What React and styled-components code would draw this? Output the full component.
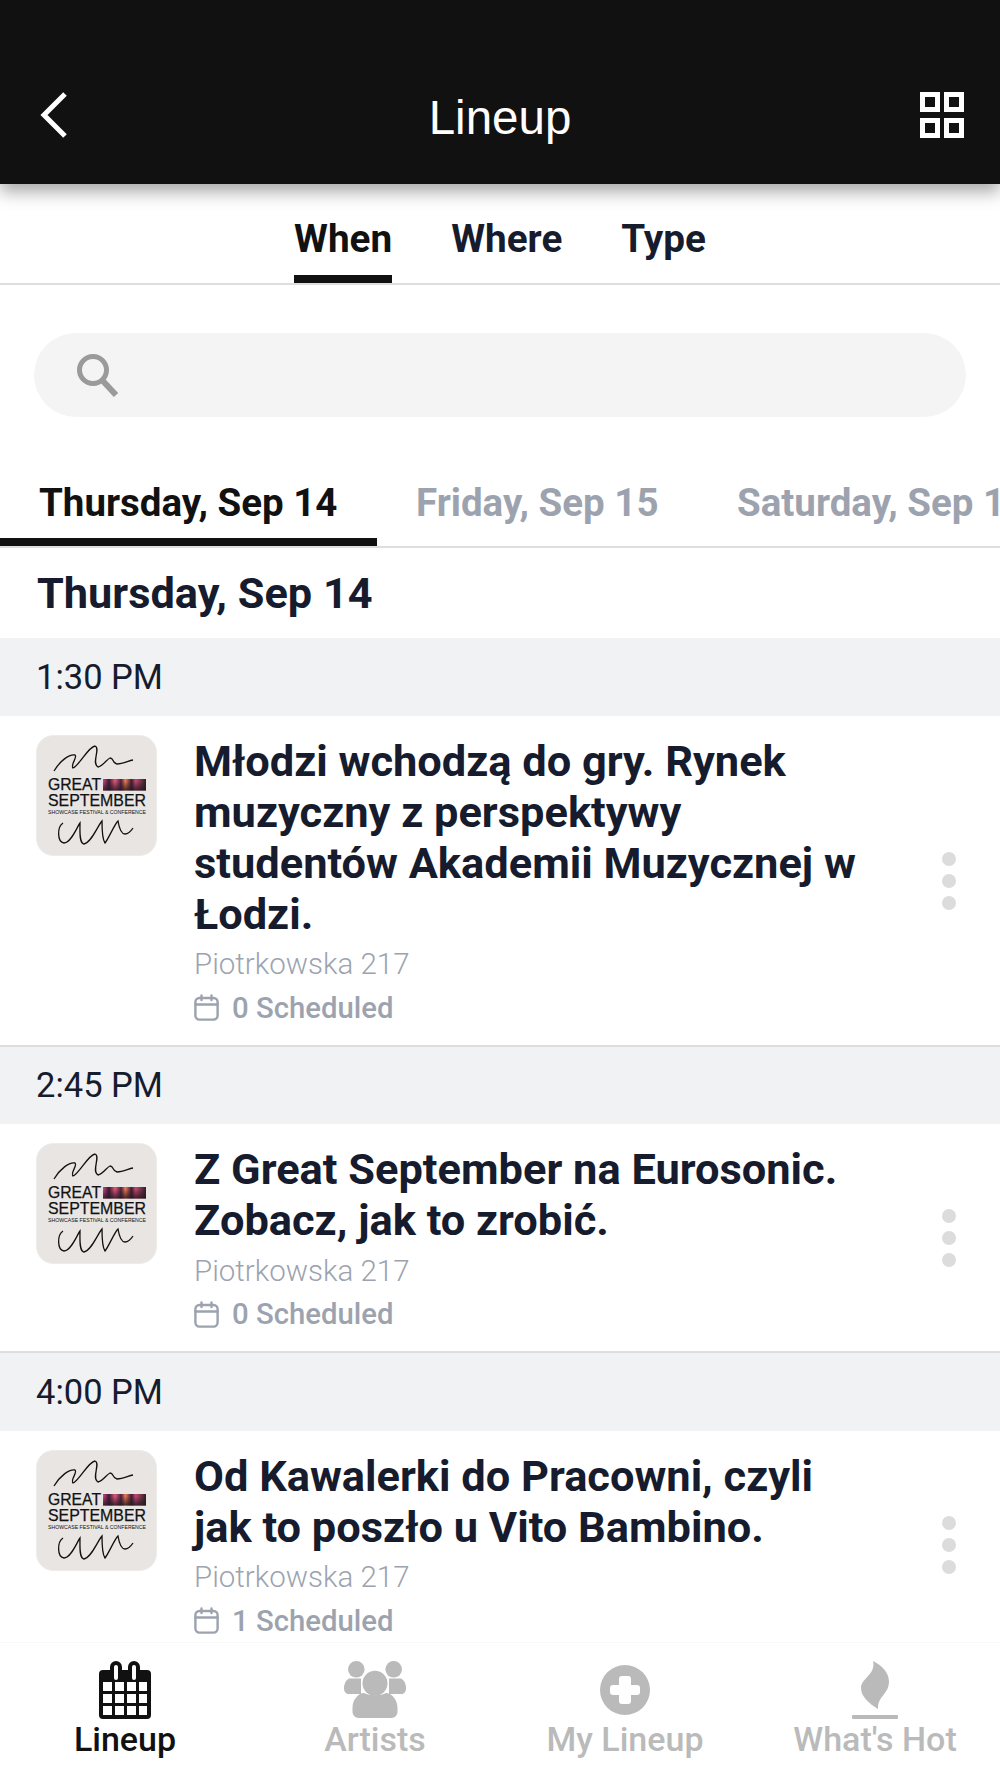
import React from "react";
import styled, { createGlobalStyle } from "styled-components";

const sessions = [
  {
    time: "1:30 PM",
    title: "Młodzi wchodzą do gry. Rynek muzyczny z perspektywy studentów Akademii Muzycznej w Łodzi.",
    scheduled: 0,
  },
  {
    time: "2:45 PM",
    title: "Z Great September na Eurosonic. Zobacz, jak to zrobić.",
    scheduled: 0,
  },
  {
    time: "4:00 PM",
    title: "Od Kawalerki do Pracowni, czyli jak to poszło u Vito Bambino.",
    scheduled: 1,
  },
];

const GlobalStyle = createGlobalStyle`
  html, body {
    margin: 0;
    padding: 0;
    background: #fff;
  }
  * {
    box-sizing: border-box;
  }
`;

const Page = styled.div`
  width: 1000px;
  height: 1778px;
  display: flex;
  flex-direction: column;
  overflow: hidden;
  font-family: Roboto, "Liberation Sans", sans-serif;
  color: #161c2d;
`;

const Header = styled.header`
  position: relative;
  z-index: 2;
  flex: none;
  height: 184px;
  padding: 92px 36px 0;
  display: grid;
  grid-template-columns: 1fr auto 1fr;
  align-items: start;
  background: #111112;
  box-shadow: 0 8px 16px rgba(0, 0, 0, 0.34);
`;

const HeaderTitle = styled.h1`
  margin: 0;
  font-family: "Liberation Sans", Arial, sans-serif;
  font-size: 47.5px;
  line-height: 52px;
  font-weight: 400;
  color: #fff;
`;

const HeaderIcon = styled.svg`
  display: block;
  justify-self: ${(p) => p.$side};
  margin-left: ${(p) => p.$offset || 0}px;
  width: ${(p) => p.$w}px;
  height: 46px;
`;

const ModeTabs = styled.nav`
  flex: none;
  height: 101px;
  display: flex;
  justify-content: center;
  gap: 59px;
  border-bottom: 2px solid #dedede;
`;

const ModeTab = styled.div`
  height: 99px;
  padding-top: 32px;
  font-size: 38.7px;
  line-height: 46px;
  font-weight: 700;
  color: ${(p) => (p.$active ? "#111" : "#161c2d")};
  border-bottom: 8px solid ${(p) => (p.$active ? "#111" : "transparent")};
`;

const SearchWrap = styled.div`
  flex: none;
  padding: 48px 34px 0;
`;

const SearchBar = styled.div`
  height: 84px;
  padding-left: 42px;
  display: flex;
  align-items: center;
  border-radius: 42px;
  background: #f4f4f4;
`;

const DayTabs = styled.nav`
  flex: none;
  margin-top: 48px;
  height: 83px;
  display: flex;
  overflow: hidden;
  border-bottom: 2px solid #dedede;
`;

const DayTab = styled.div`
  flex: none;
  height: 81px;
  width: ${(p) => p.$w}px;
  padding: 16px 0 0 ${(p) => p.$pad}px;
  font-size: 38.5px;
  line-height: 44px;
  font-weight: 700;
  white-space: nowrap;
  color: ${(p) => (p.$active ? "#111" : "#9ca3af")};
  border-bottom: 8px solid ${(p) => (p.$active ? "#111" : "transparent")};
`;

const Content = styled.main`
  flex: 1;
  min-height: 0;
  overflow: hidden;
`;

const DayHeading = styled.h2`
  margin: 0;
  height: 90px;
  padding: 0 37px;
  display: flex;
  align-items: center;
  font-size: 43.3px;
  font-weight: 700;
  color: #161c2d;
`;

const TimeBand = styled.div`
  height: 77.5px;
  padding-left: 36px;
  display: flex;
  align-items: center;
  background: #f1f2f4;
  font-size: 34.5px;
  color: #161c2d;
`;

const Row = styled.article`
  display: grid;
  grid-template-columns: 121px 676px 1fr;
  column-gap: 37px;
  padding: 19px 0 15px 36px;
  background: #fff;
  border-bottom: 2px solid #dedede;
`;

const Body = styled.div`
  grid-column: 2;
  padding-top: 1px;
`;

const Title = styled.h3`
  margin: 0;
  font-size: 43.4px;
  line-height: 51px;
  font-weight: 700;
  color: #161c2d;
`;

const Location = styled.div`
  height: 43px;
  display: flex;
  align-items: center;
  margin-top: 3px;
  font-size: 29.5px;
  font-weight: 300;
  color: #9ca3af;
`;

const Scheduled = styled.div`
  height: 44px;
  display: flex;
  align-items: center;
  gap: 13px;
  font-size: 29.3px;
  font-weight: 500;
  color: #9ca3af;
`;

const Dots = styled.div`
  align-self: center;
  margin: -3px 0 0 35px;
  display: flex;
  flex-direction: column;
  gap: 8px;
`;

const Dot = styled.span`
  display: block;
  width: 14px;
  height: 14px;
  border-radius: 50%;
  background: #dcdcdc;
`;

const TabBar = styled.footer`
  position: relative;
  z-index: 1;
  flex: none;
  height: 136px;
  padding-top: 18px;
  display: grid;
  grid-template-columns: repeat(4, 1fr);
  background: #fff;
  border-top: 1px solid #f8f8f8;
`;

const BarItem = styled.div`
  display: flex;
  flex-direction: column;
  align-items: center;
  color: ${(p) => (p.$active ? "#111" : "#bababa")};
`;

const BarIconBox = styled.div`
  height: 58px;
  display: flex;
  align-items: center;
  justify-content: center;
`;

const BarLabel = styled.span`
  font-size: 34px;
  line-height: 40px;
  font-weight: 500;
  white-space: nowrap;
`;

const BackIcon = () => (
  <HeaderIcon $w={28} $side="start" $offset={4} viewBox="0 0 28 46" fill="none">
    <path d="M25 2 4 23l21 21" stroke="#fff" strokeWidth="5" strokeLinecap="butt" />
  </HeaderIcon>
);

const GridIcon = () => (
  <HeaderIcon $w={44} $side="end" viewBox="0 0 44 46" fill="none" stroke="#fff" strokeWidth="5">
    <rect x="2.5" y="2.5" width="15" height="15" />
    <rect x="26.5" y="2.5" width="15" height="15" />
    <rect x="2.5" y="28.5" width="15" height="15" />
    <rect x="26.5" y="28.5" width="15" height="15" />
  </HeaderIcon>
);

const SearchIcon = () => (
  <svg width="44" height="44" viewBox="0 0 44 44" fill="none" stroke="#9a9a9a">
    <circle cx="17" cy="17" r="13.5" strokeWidth="5" />
    <path d="m26 27 14 15" strokeWidth="6" />
  </svg>
);

const SmallCalendar = () => (
  <svg width="25" height="27" viewBox="0 0 25 27" fill="none" stroke="#9ca3af" strokeWidth="2.4" strokeLinecap="round">
    <rect x="1.4" y="4" width="22.2" height="21.6" rx="4" />
    <path d="M1.4 10.5h22.2M7.5 1.4v4.6M17.5 1.4v4.6" />
  </svg>
);

const Logo = () => (
  <svg width="121" height="121" viewBox="0 0 121 121">
    <defs>
      <linearGradient id="heat" x1="0" x2="1" y1="0" y2="0">
        <stop offset="0" stopColor="#d43f86" />
        <stop offset="0.14" stopColor="#3a1b35" />
        <stop offset="0.28" stopColor="#e0567a" />
        <stop offset="0.42" stopColor="#4a2040" />
        <stop offset="0.52" stopColor="#ef7a4e" />
        <stop offset="0.66" stopColor="#3d1d38" />
        <stop offset="0.76" stopColor="#c2476f" />
        <stop offset="1" stopColor="#2a2024" />
      </linearGradient>
      <linearGradient id="heatShade" x1="0" x2="0" y1="0" y2="1">
        <stop offset="0.2" stopColor="#221a20" stopOpacity="0" />
        <stop offset="1" stopColor="#221a20" stopOpacity="0.85" />
      </linearGradient>
    </defs>
    <rect x="0.5" y="0.5" width="120" height="120" rx="17" fill="#e8e5e2" stroke="#eeece9" />
    <path
      d="M18 36C24 26 33 19 39 20 42 22 34 30 37 33 43 31 52 12 59 11 65 13 55 28 62 32 67 31 71 24 74 23 78 23 76 28 81 29 87 29 92 26 97 25"
      fill="none"
      stroke="#111"
      strokeWidth="1.3"
    />
    <g fill="#111" fontFamily="'Liberation Sans', Arial, sans-serif">
      <text x="12" y="55" fontSize="16.5" stroke="#111" strokeWidth="0.25" textLength="53" lengthAdjust="spacingAndGlyphs">GREAT</text>
      <text x="12" y="71" fontSize="16.5" stroke="#111" strokeWidth="0.25" textLength="98" lengthAdjust="spacingAndGlyphs">SEPTEMBER</text>
      <text x="12" y="79" fontSize="5.4" textLength="98" lengthAdjust="spacingAndGlyphs">SHOWCASE FESTIVAL &amp; CONFERENCE</text>
    </g>
    <rect x="67" y="44" width="43" height="11.5" fill="url(#heat)" />
    <rect x="67" y="44" width="43" height="11.5" fill="url(#heatShade)" />
    <path
      d="M27 88C21 92 21 107 28 108 35 108 41 92 44 88 44 96 43 108 48 109 55 108 61 92 66 86 66 94 66 104 69 108 73 103 78 90 82 86 83 92 85 99 89 99 92 99 95 96 97 93"
      fill="none"
      stroke="#111"
      strokeWidth="1.3"
    />
  </svg>
);

const CalendarBarIcon = () => (
  <svg width="54" height="58" viewBox="0 0 54 58" fill="currentColor">
    <path
      fillRule="evenodd"
      d="M5 9h7V6a6 6 0 0 1 12 0v3h6V6a6 6 0 0 1 12 0v3h7a4 4 0 0 1 4 4v41a4 4 0 0 1-4 4H5a4 4 0 0 1-4-4V13a4 4 0 0 1 4-4Zm11-3v11a2 2 0 0 0 4 0V6a2 2 0 0 0-4 0Zm18 0v11a2 2 0 0 0 4 0V6a2 2 0 0 0-4 0ZM5 21v9h9v-9Zm12 0v9h9v-9Zm12 0v9h9v-9Zm12 0v9h8v-9ZM5 33v9h9v-9Zm12 0v9h9v-9Zm12 0v9h9v-9Zm12 0v9h8v-9ZM5 45v9h9v-9Zm12 0v9h9v-9Zm12 0v9h9v-9Zm12 0v9h8v-9Z"
    />
  </svg>
);

const PeopleBarIcon = () => (
  <svg width="62" height="58" viewBox="0 0 62 58" fill="currentColor">
    <circle cx="12.3" cy="8.3" r="8.3" />
    <circle cx="49.7" cy="8.3" r="8.3" />
    <path d="M5 17.500C2 19 0 23 0 27c0 4 2 6 5 6h12V17.500Z" />
    <path d="M57 17.500c3 1.500 5 5.500 5 9.500 0 4-2 6-5 6H45V17.500Z" />
    <circle cx="31" cy="22.300" r="12.500" stroke="#fff" strokeWidth="2.500" paintOrder="stroke" />
    <path d="M8.500 47C8.500 38 15 32 20 32c5 3 17 3 22 0 5 0 11.500 6 11.500 15v4a6 6 0 0 1-6 6H14.500a6 6 0 0 1-6-6Z" />
  </svg>
);

const PlusBarIcon = () => (
  <svg width="50" height="50" viewBox="0 0 50 50" fill="currentColor">
    <path
      fillRule="evenodd"
      d="M25 0a25 25 0 1 1 0 50 25 25 0 0 1 0-50Zm-3 11a3 3 0 0 0-3 3v6h-6a3 3 0 0 0-3 3v4a3 3 0 0 0 3 3h6v6a3 3 0 0 0 3 3h6a3 3 0 0 0 3-3v-6h6a3 3 0 0 0 3-3v-4a3 3 0 0 0-3-3h-6v-6a3 3 0 0 0-3-3Z"
    />
  </svg>
);

const FlameBarIcon = () => (
  <svg width="46" height="58" viewBox="0 0 46 58" fill="currentColor">
    <path d="M21 0c8 4 16 11 16 21 0 11-11 15-11 25 0 1 0 2 0 2-8-5-17-12-17-21C9 17 24 14 21 0Z" />
    <rect x="0" y="54" width="46" height="4" rx="1" />
  </svg>
);

const barItems = [
  { label: "Lineup", Icon: CalendarBarIcon, active: true },
  { label: "Artists", Icon: PeopleBarIcon },
  { label: "My Lineup", Icon: PlusBarIcon },
  { label: "What's Hot", Icon: FlameBarIcon },
];

const App = () => {
  return (
    <Page>
      <GlobalStyle />
      <Header>
        <BackIcon />
        <HeaderTitle>Lineup</HeaderTitle>
        <GridIcon />
      </Header>
      <ModeTabs>
        <ModeTab $active>When</ModeTab>
        <ModeTab>Where</ModeTab>
        <ModeTab>Type</ModeTab>
      </ModeTabs>
      <SearchWrap>
        <SearchBar>
          <SearchIcon />
        </SearchBar>
      </SearchWrap>
      <DayTabs>
        <DayTab $active $w={377} $pad={39}>Thursday, Sep 14</DayTab>
        <DayTab $w={321} $pad={39}>Friday, Sep 15</DayTab>
        <DayTab $w={400} $pad={39}>Saturday, Sep 16</DayTab>
      </DayTabs>
      <Content>
        <DayHeading>Thursday, Sep 14</DayHeading>
        {sessions.map((s) => (
          <section key={s.time}>
            <TimeBand>{s.time}</TimeBand>
            <Row>
              <Logo />
              <Body>
                <Title>{s.title}</Title>
                <Location>Piotrkowska 217</Location>
                <Scheduled>
                  <SmallCalendar />
                  {s.scheduled} Scheduled
                </Scheduled>
              </Body>
              <Dots>
                <Dot />
                <Dot />
                <Dot />
              </Dots>
            </Row>
          </section>
        ))}
      </Content>
      <TabBar>
        {barItems.map(({ label, Icon, active }) => (
          <BarItem key={label} $active={active}>
            <BarIconBox>
              <Icon />
            </BarIconBox>
            <BarLabel>{label}</BarLabel>
          </BarItem>
        ))}
      </TabBar>
    </Page>
  );
};

export default App;
